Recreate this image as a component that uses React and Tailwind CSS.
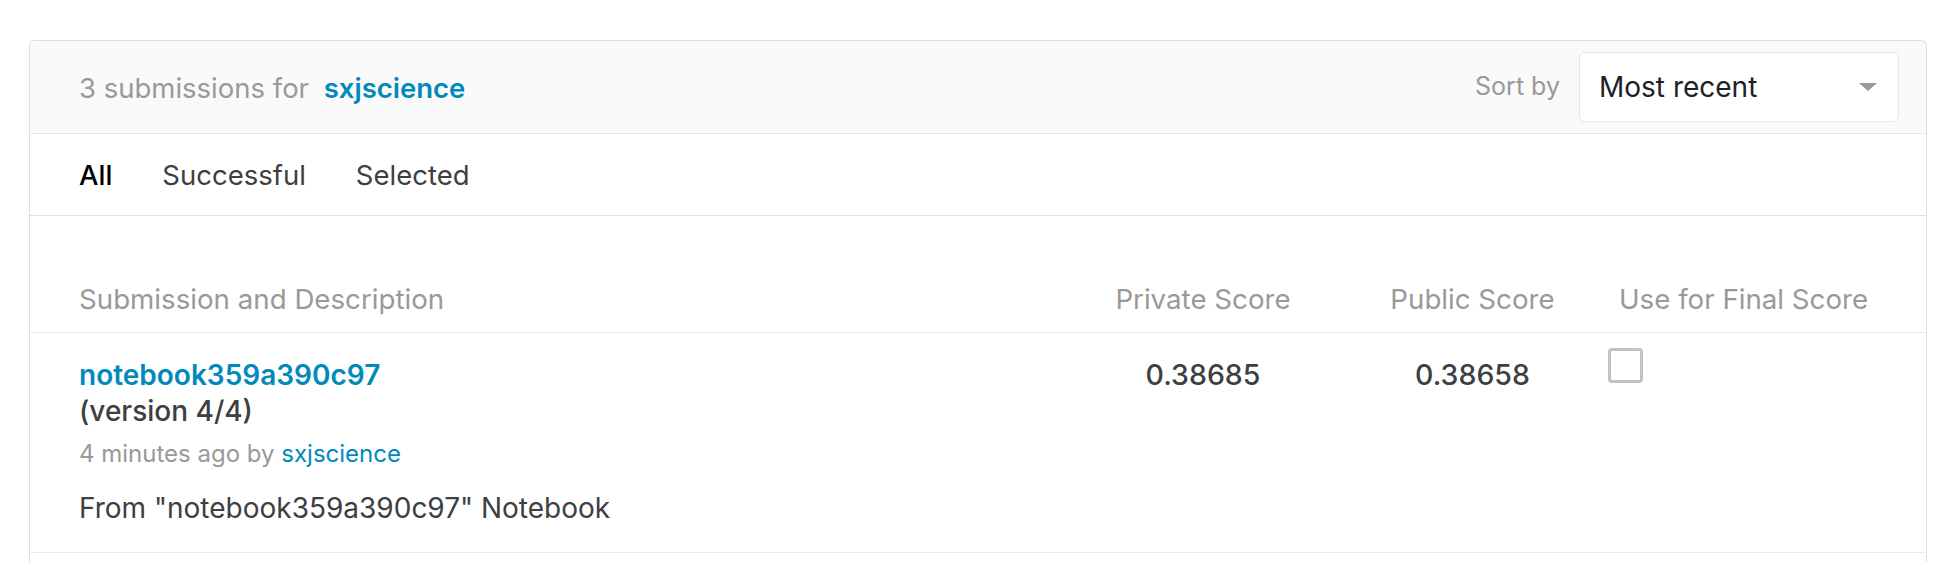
import React, { useState } from "react";

/* ===================== SUBMISSIONS ===================== */

const TABS = ["All", "Successful", "Selected"];

const submissions = [
  {
    name: "notebook359a390c97",
    version: "(version 4/4)",
    when: "4 minutes ago",
    user: "sxjscience",
    description: 'From "notebook359a390c97" Notebook',
    privateScore: "0.38685",
    publicScore: "0.38658",
  },
];

const SortSelect = () => (
  <div className="flex items-center gap-[19px]">
    <span className="text-[25px] text-[#999]">Sort by</span>
    <div className="flex h-[70px] w-[320px] items-center justify-between rounded-[6px] border border-[#e6e6e6] bg-white pl-[19px] pr-[21px]">
      <span className="text-[28px] text-[#202124]">Most recent</span>
      <svg width="18" height="8" viewBox="0 0 18 8">
        <path d="M0 0h18L9 8z" fill="#9a9a9a" />
      </svg>
    </div>
  </div>
);

const SubmissionRow = ({ s }) => {
  const [checked, setChecked] = useState(false);
  return (
    <div className="flex border-b border-[#ebebeb]">
      <div className="flex-1 pl-[49px] pt-[24px] pb-[26px]">
        <div className="text-[28px] leading-[36px] font-semibold text-[#008abc]">{s.name}</div>
        <div className="text-[28px] leading-[36px] font-medium text-[#3c4043]">{s.version}</div>
        <div className="mt-[9px] text-[24px] leading-[32px] text-[#999]">
          {s.when} by <span className="text-[#008abc]">{s.user}</span>
        </div>
        <div className="mt-[20px] text-[28px] leading-[36px] text-[#3c4043]">{s.description}</div>
      </div>
      <div className="w-[268px] pt-[24px] text-center text-[28.5px] leading-[36px] font-medium text-[#3c4043]">
        {s.privateScore}
      </div>
      <div className="w-[271px] pt-[24px] text-center text-[28.5px] leading-[36px] font-medium text-[#3c4043]">
        {s.publicScore}
      </div>
      <div className="w-[318px] pt-[15px]">
        <button
          onClick={() => setChecked(!checked)}
          className="block h-[35px] w-[35px] rounded-[4px] border-[3px] border-[#c0c3c7] bg-white"
        />
      </div>
    </div>
  );
};

export default function App() {
  const [tab, setTab] = useState("All");

  return (
    <div
      className="min-h-[562px] bg-white pl-[29px] pr-[19px] pt-[40px]"
      style={{ fontFamily: "Inter, 'Noto Sans', sans-serif" }}
    >
      <div className="rounded-t-[6px] border border-b-0 border-[#dedede] pb-[12px]">
        {/* header */}
        <div className="flex h-[93px] items-center justify-between rounded-t-[6px] border-b border-[#e6e6e6] bg-[#fafafa] pl-[49px] pr-[27px]">
          <div className="pt-[3px] text-[27.5px] text-[#999]">
            3 submissions for{" "}
            <span className="ml-[7px] font-semibold text-[#008abc]">sxjscience</span>
          </div>
          <SortSelect />
        </div>

        {/* tabs */}
        <div className="flex h-[82px] items-center gap-[50px] border-b border-[#e0e0e0] pl-[49px]">
          {TABS.map((t) => (
            <button
              key={t}
              onClick={() => setTab(t)}
              className={`text-[27.5px] leading-[36px] ${
                tab === t ? "font-medium text-[#000]" : "text-[#3c4043]"
              }`}
            >
              {t}
            </button>
          ))}
        </div>

        {/* column headings */}
        <div className="flex border-b border-[#ebebeb] pt-[65px] pb-[15px] text-[27.7px] leading-[36px] text-[#999]">
          <div className="flex-1 pl-[49px]">Submission and Description</div>
          <div className="w-[268px] text-center">Private Score</div>
          <div className="w-[271px] text-center">Public Score</div>
          <div className="w-[318px] pl-[11px]">Use for Final Score</div>
        </div>

        {submissions.map((s) => (
          <SubmissionRow key={s.name} s={s} />
        ))}
      </div>
    </div>
  );
}
